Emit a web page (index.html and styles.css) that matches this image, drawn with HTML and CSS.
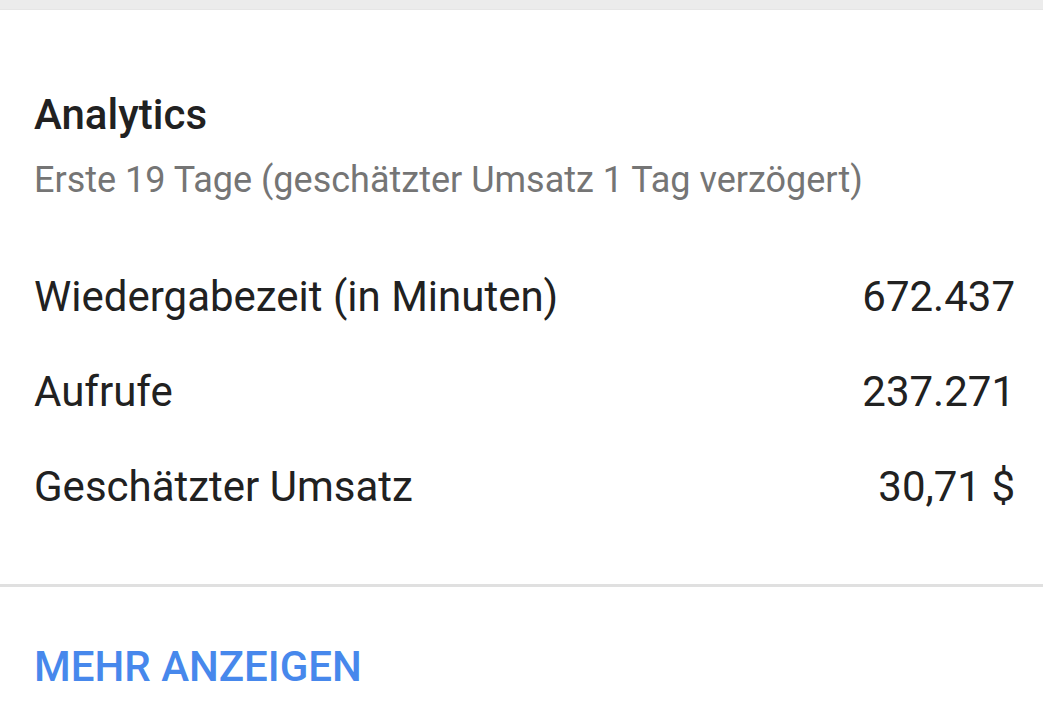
FILE: index.html
```html
<!DOCTYPE html>
<html lang="de">
<head>
<meta charset="utf-8">
<link rel="stylesheet" href="styles.css">
</head>
<body>
<div class="topbar"></div>
<section class="card">
  <div class="content">
    <h2 class="title">Analytics</h2>
    <p class="subtitle">Erste 19 Tage (geschätzter Umsatz 1 Tag verzögert)</p>
    <div class="rows">
      <div class="row"><span>Wiedergabezeit (in Minuten)</span><span>672.437</span></div>
      <div class="row"><span>Aufrufe</span><span>237.271</span></div>
      <div class="row"><span>Geschätzter Umsatz</span><span>30,71 $</span></div>
    </div>
  </div>
  <div class="divider"></div>
  <div class="action"><span class="more">MEHR ANZEIGEN</span></div>
</section>
</body>
</html>
```
FILE: styles.css
```css
html, body {
  margin: 0;
  padding: 0;
  background: #ffffff;
  font-family: Roboto, "Noto Sans", sans-serif;
  width: 1043px;
  height: 727px;
  overflow: hidden;
}
.topbar {
  height: 9px;
  background: #ececec;
  border-bottom: 1px solid #e6e6e6;
}
.card {
  display: flex;
  flex-direction: column;
}
.content {
  padding: 0 28px 0 34px;
}
.title {
  margin: 0;
  padding-top: 80px;
  font-size: 42px;
  font-weight: 500;
  line-height: 50px;
  color: #212121;
}
.subtitle {
  margin: 0;
  padding-top: 18px;
  font-size: 36px;
  line-height: 44px;
  color: #757575;
}
.rows {
  display: flex;
  flex-direction: column;
  padding-top: 47px;
  padding-bottom: 50px;
}
.row {
  display: flex;
  justify-content: space-between;
  font-size: 42px;
  line-height: 95px;
  color: #212121;
}
.divider {
  height: 3px;
  background: #e0e0e0;
}
.action {
  padding: 55px 34px 0;
  line-height: 50px;
}
.more {
  font-size: 42px;
  font-weight: 500;
  color: #4788ec;
}
```
